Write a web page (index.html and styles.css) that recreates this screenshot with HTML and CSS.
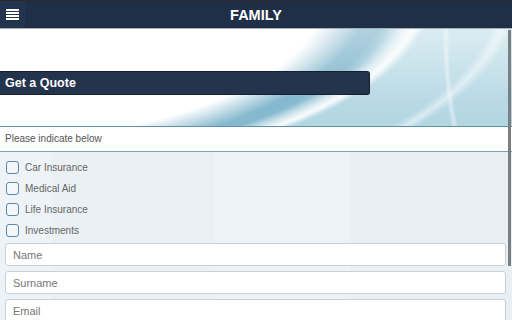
FILE: index.html
```html
<!DOCTYPE html>
<html lang="en">
<head>
    <meta charset="UTF-8">
    <meta name="viewport" content="width=device-width, initial-scale=1.0">
    <title>Family - Get a Quote</title>
    <link rel="stylesheet" href="styles.css">
</head>
<body>
    <div class="header">
        <button class="menu-btn" aria-label="Menu">
            <svg width="13" height="12" viewBox="0 0 13 12">
                <rect x="0" y="0" width="13" height="2" fill="#fff"/>
                <rect x="0" y="3" width="13" height="2" fill="#fff"/>
                <rect x="0" y="6" width="13" height="2" fill="#fff"/>
                <rect x="0" y="9" width="13" height="2" fill="#fff"/>
            </svg>
        </button>
        <h1>FAMILY</h1>
    </div>

    <div class="banner">
        <h2 class="quote-bar">Get a Quote</h2>
    </div>

    <div class="intro">Please indicate below</div>

    <div class="form-area">
        <ul class="options">
            <li><label><span class="box"></span>Car Insurance</label></li>
            <li><label><span class="box"></span>Medical Aid</label></li>
            <li><label><span class="box"></span>Life Insurance</label></li>
            <li><label><span class="box"></span>Investments</label></li>
        </ul>

        <input type="text" placeholder="Name">
        <input type="text" placeholder="Surname">
        <input type="text" placeholder="Email">
    </div>

    <div class="scroll-thumb"></div>
</body>
</html>
```

FILE: styles.css
```css
body {
    margin: 0;
    font-family: "Liberation Sans", Arial, sans-serif;
    background: #e9f0f5;
    height: 320px;
    overflow: hidden;
    position: relative;
}
.header {
    height: 29px;
    box-sizing: border-box;
    background: #1f2f48;
    border-top: 1px solid #2b2a2a;
    border-bottom: 1px solid #a9b0b8;
    display: flex;
    align-items: center;
}
.menu-btn {
    width: 25px;
    height: 27px;
    padding: 0 0 0 6px;
    border: none;
    background: #23344f;
    display: flex;
    align-items: center;
}
.header h1 {
    flex: 1;
    margin: 0 0 0 -25px;
    text-align: center;
    color: #fff;
    font-size: 14.5px;
    font-weight: bold;
}
.banner {
    height: 98px;
    padding-top: 42px;
    box-sizing: border-box;
    border-bottom: 1px solid #5f8fb0;
    background:
        radial-gradient(ellipse 371px 169px at 0 -40px, #fff 0, #fff 88%, rgba(255,255,255,0) 100%),
        radial-gradient(ellipse 430px 184px at 0 -40px, rgba(255,255,255,0) 93%, rgba(255,255,255,0.9) 98.5%, rgba(255,255,255,0) 101%),
        linear-gradient(to bottom, rgba(255,255,255,0.35) 0%, rgba(255,255,255,0) 75%),
        radial-gradient(ellipse 400px 178px at 0 -40px, #86b9ce 0, #86b9ce 97%, rgba(134,185,206,0) 104%),
        radial-gradient(ellipse 520px 230px at 0 -40px, rgba(255,255,255,0) 96%, rgba(255,255,255,0.5) 98%, rgba(255,255,255,0) 100%),
        radial-gradient(ellipse 120px 240px at 560px 10px, rgba(255,255,255,0) 92%, rgba(255,255,255,0.45) 95%, rgba(255,255,255,0) 98%),
        linear-gradient(to bottom, #c7e2eb 0%, #b3d6e3 100%);
}
.quote-bar {
    width: 370px;
    height: 24px;
    margin: 0;
    padding-left: 5px;
    box-sizing: border-box;
    background: #24344c;
    border: 1px solid #16202f;
    border-left: none;
    border-radius: 0 3px 3px 0;
    color: #fff;
    font-size: 12.5px;
    font-weight: bold;
    line-height: 22px;
}
.intro {
    height: 24px;
    background: #fff;
    border-bottom: 1px solid #7fa2bb;
    padding-left: 5px;
    font-size: 10px;
    color: #555;
    line-height: 23px;
}
.form-area {
    padding: 8px 6px 0 5px;
    background:
        linear-gradient(to right, #eef3f7 0, #eef3f7 52px, #eaf0f4 52px, #eaf0f4 215px, #eef3f7 215px, #eef3f7 350px, #e9eff3 350px);
    min-height: 200px;
}
.options {
    list-style: none;
    margin: 0 0 -1px;
    padding: 0 0 0 1px;
}
.options li {
    height: 21px;
}
.options label {
    display: flex;
    align-items: center;
    font-size: 10px;
    color: #666;
    height: 15px;
}
.box {
    width: 11px;
    height: 11px;
    border: 1.5px solid #5b88aa;
    border-radius: 3px;
    background: #f4f7f9;
    margin-right: 6px;
}
input {
    display: block;
    width: 100%;
    height: 23px;
    box-sizing: border-box;
    margin: 0 0 5px;
    padding: 0 7px;
    border: 1px solid #c7d1d8;
    border-radius: 3px;
    background: #fff;
    font-family: "Liberation Sans", Arial, sans-serif;
    font-size: 11px;
}
input::placeholder {
    color: #777;
}
.scroll-thumb {
    position: absolute;
    top: 30px;
    right: 1px;
    width: 3px;
    height: 236px;
    background: #7c7f82;
}
```
